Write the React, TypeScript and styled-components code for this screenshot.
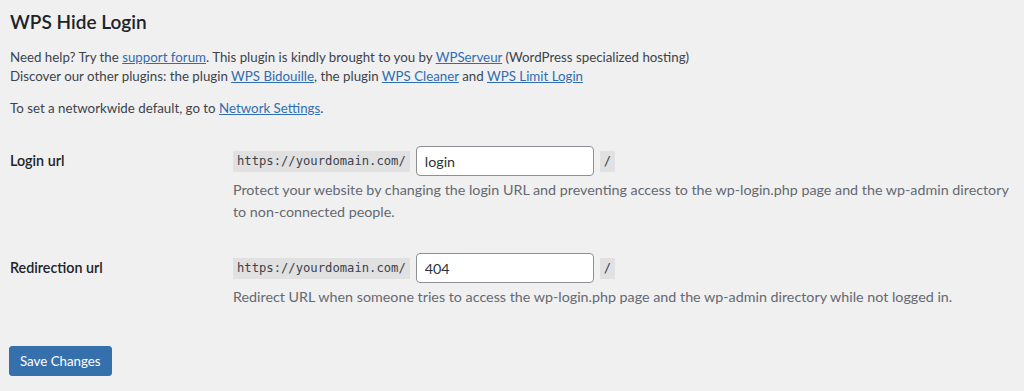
import React from 'react';
import styled, { createGlobalStyle } from 'styled-components';

const GlobalStyle = createGlobalStyle`
  html, body {
    margin: 0;
    padding: 0;
    background: #f0f0f1;
  }
  body {
    font-family: Lato, "Open Sans", sans-serif;
    font-size: 13.3px;
    color: #3c434a;
  }
`;

const Wrap = styled.div`
  padding: 10px 10px 0 10px;
  width: 1024px;
  height: 391px;
  box-sizing: border-box;
`;

const Title = styled.h2`
  margin: 0;
  font-size: 19px;
  line-height: 24px;
  font-weight: 600;
  color: #1d2327;
`;

const Para = styled.p<{ $gap?: number }>`
  margin: ${p => p.$gap ?? 0}px 0 0;
  font-size: 13.3px;
  line-height: 19px;
`;

const A = styled.a`
  color: #2f6db0;
  text-decoration: underline;
`;

const FormTable = styled.div`
  margin-top: 28px;
  display: flex;
  flex-direction: column;
  gap: 30px;
`;

const Row = styled.div`
  display: grid;
  grid-template-columns: 223px 1fr;
`;

const Label = styled.label`
  font-weight: 600;
  color: #1d2327;
  font-size: 14.3px;
  line-height: 30px;
`;

const Field = styled.div`
  display: flex;
  flex-direction: column;
`;

const InputLine = styled.div`
  display: flex;
  align-items: center;
  gap: 6px;
`;

const Code = styled.code`
  font-family: "DejaVu Sans Mono", "Liberation Mono", monospace;
  font-size: 12.2px;
  background: #e1e1e2;
  color: #3c434a;
  padding: 0 4px;
  line-height: 21px;
`;

const Input = styled.input`
  box-sizing: border-box;
  width: 178px;
  height: 30px;
  border: 1px solid #8c8f94;
  border-radius: 4px;
  background: #fff;
  padding: 0 8px;
  font-family: inherit;
  font-size: 14.3px;
  color: #2c3338;
  outline: none;
`;

const Desc = styled.p`
  margin: 3px 0 0;
  font-size: 14.3px;
  line-height: 22px;
  color: #646970;
`;

const Button = styled.button`
  margin-top: 38px;
  margin-left: -1px;
  height: 30px;
  padding: 0 10px;
  border: 1px solid #3570ad;
  border-radius: 3px;
  background: #3570ad;
  color: #fff;
  font-family: inherit;
  font-size: 13.3px;
`;

const fields = [
  {
    label: 'Login url',
    value: 'login',
    desc: 'Protect your website by changing the login URL and preventing access to the wp-login.php page and the wp-admin directory to non-connected people.',
  },
  {
    label: 'Redirection url',
    value: '404',
    desc: 'Redirect URL when someone tries to access the wp-login.php page and the wp-admin directory while not logged in.',
  },
];

const App: React.FC = () => (
  <>
    <GlobalStyle />
    <Wrap>
      <Title>WPS Hide Login</Title>
      <Para $gap={14}>
        Need help? Try the <A href="#">support forum</A>. This plugin is kindly brought to you by{' '}
        <A href="#">WPServeur</A> (WordPress specialized hosting)
        <br />
        Discover our other plugins: the plugin <A href="#">WPS Bidouille</A>, the plugin{' '}
        <A href="#">WPS Cleaner</A> and <A href="#">WPS Limit Login</A>
      </Para>
      <Para $gap={13}>
        To set a networkwide default, go to <A href="#">Network Settings</A>.
      </Para>
      <FormTable>
        {fields.map(f => (
          <Row key={f.label}>
            <Label>{f.label}</Label>
            <Field>
              <InputLine>
                <Code>https://yourdomain.com/</Code>
                <Input defaultValue={f.value} />
                <Code>/</Code>
              </InputLine>
              <Desc>{f.desc}</Desc>
            </Field>
          </Row>
        ))}
      </FormTable>
      <Button>Save Changes</Button>
    </Wrap>
  </>
);

export default App;
